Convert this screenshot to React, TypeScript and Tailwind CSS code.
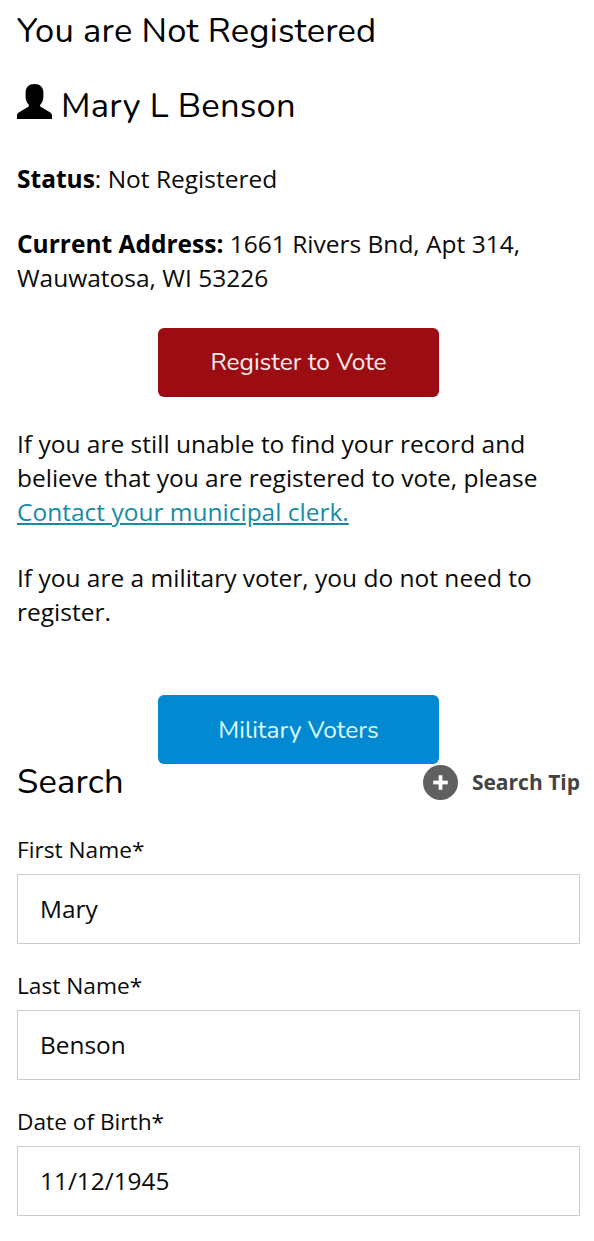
import { Plus } from 'lucide-react';

const fields = [
  { id: 'firstName', label: 'First Name*', value: 'Mary' },
  { id: 'lastName', label: 'Last Name*', value: 'Benson' },
  { id: 'dob', label: 'Date of Birth*', value: '11/12/1945' },
];

function PersonIcon() {
  return (
    <svg className="mt-[8px] h-[35px] w-[35px] shrink-0" viewBox="0 0 35 35" fill="currentColor" aria-hidden="true">
      <path d="M17.5 0C12 0 8.600 3.200 8.600 8.500v4c0 3.500 1 6 3.200 8.300v1.700L2.500 28C.8 29 0 30 0 31.800V35h35v-3.200c0-1.800-.8-2.800-2.500-3.800l-9.300-5.500v-1.700c2.200-2.300 3.200-4.800 3.200-8.300v-4C26.400 3.200 23 0 17.500 0z" />
    </svg>
  );
}

export default function App() {
  return (
    <main className="min-h-[1241px] w-[594px] bg-white pl-[17px] pr-[14px] pt-[6px] font-['Open_Sans',sans-serif] text-[24.5px] leading-[34px] text-[#0a0a0a]">
      <h1 className="h-[50px] whitespace-nowrap font-['Nunito','Open_Sans',sans-serif] text-[34.5px] font-normal leading-[50px] tracking-[0.2px] text-black">
        You are Not Registered
      </h1>

      <h2 className="mt-[20px] flex h-[60px] gap-[9px] whitespace-nowrap font-['Nunito','Open_Sans',sans-serif] text-[34.5px] font-normal leading-[60px] tracking-[0.2px] text-black">
        <PersonIcon />
        <span>Mary L Benson</span>
      </h2>

      <p className="mt-[26px]">
        <strong className="font-bold text-black">Status</strong>: Not Registered
      </p>
      <p className="mt-[31px] whitespace-nowrap">
        <strong className="font-bold text-black">Current Address:</strong> 1661 Rivers Bnd, Apt 314,
        <br />
        Wauwatosa, WI 53226
      </p>

      <button className="mx-auto mt-[33px] block h-[69px] w-[281px] rounded-md bg-[#9c0d13] pb-[2px] font-['Nunito','Open_Sans',sans-serif] text-[24.5px] text-[#fdeeee]">
        Register to Vote
      </button>

      <p className="mt-[30px] whitespace-nowrap">
        If you are still unable to find your record and
        <br />
        believe that you are registered to vote, please
        <br />
        <a href="#clerk" className="text-[#168ba3] underline">
          Contact your municipal clerk.
        </a>
      </p>
      <p className="mt-[32px] whitespace-nowrap">
        If you are a military voter, you do not need to
        <br />
        register.
      </p>

      <button className="mx-auto mt-[66px] block h-[69px] w-[281px] rounded-md bg-[#0289d2] font-['Nunito','Open_Sans',sans-serif] text-[24.5px] text-[#dcfaff]">
        Military Voters
      </button>

      <div className="flex h-[36px] items-center justify-between">
        <h2 className="font-['Nunito','Open_Sans',sans-serif] text-[34.5px] font-normal tracking-[0.2px] text-black">Search</h2>
        <div className="flex items-center gap-[14px] text-[21px] font-bold text-[#444]">
          <span className="flex h-[35px] w-[35px] items-center justify-center rounded-full bg-[#606060] text-white">
            <Plus size={25} strokeWidth={3.6} strokeLinecap="butt" />
          </span>
          <span>Search Tip</span>
        </div>
      </div>

      <form className="mt-[33px]">
        {fields.map((field) => (
          <div key={field.id} className="mb-[25px]">
            <label htmlFor={field.id} className="block h-[41px] text-[22.7px] leading-[34px]">
              {field.label}
            </label>
            <input
              id={field.id}
              defaultValue={field.value}
              className="block h-[70px] w-full border border-[#ccc] bg-white px-[22px] pb-[2px] text-[24.4px] outline-none"
            />
          </div>
        ))}
      </form>
    </main>
  );
}
